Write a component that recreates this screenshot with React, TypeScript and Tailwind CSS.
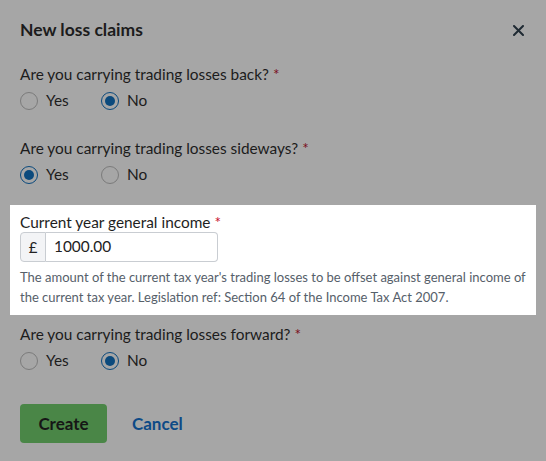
import { useState } from 'react';

type Choice = 'yes' | 'no';

export default function App() {
  const [back, setBack] = useState<Choice>('no');
  const [sideways, setSideways] = useState<Choice>('yes');
  const [forward, setForward] = useState<Choice>('no');
  const [income, setIncome] = useState('1000.00');

  return (
    <div
      className="min-h-[461px] w-[546px] bg-[#a6a6a6] px-[20px] pt-[18px] text-[#1c1c1c]"
      style={{ fontFamily: 'Lato, "Liberation Sans", sans-serif' }}
    >
      <div className="flex h-6 items-center justify-between">
        <h2 className="text-[17.5px] font-bold leading-6">New loss claims</h2>
        <button className="mr-[-4px] flex h-6 w-6 items-center justify-center text-[#1f2a33]">
          <svg width="11" height="11" viewBox="0 0 11 11" fill="none" stroke="currentColor" strokeWidth="2" strokeLinecap="round">
            <path d="M1 1l9 9M10 1l-9 9" />
          </svg>
        </button>
      </div>

      <div className="mt-[21px]">
        <Question label="Are you carrying trading losses back?" value={back} onChange={setBack} />
      </div>
      <div className="mt-[25px]">
        <Question label="Are you carrying trading losses sideways?" value={sideways} onChange={setSideways} />
      </div>

      <div className="-mx-[10px] mt-[19px] bg-white px-[10px] pb-[8px] pt-[7px]">
        <p className="text-[15.4px] leading-5 text-[#1e1e1e]">
          Current year general income <span className="text-[#c8102e]">*</span>
        </p>
        <div className="flex h-[30px] w-[198px]">
          <span className="flex w-[26px] items-center justify-center rounded-l-[4px] border border-[#c9cdd2] bg-[#f3f4f6] text-[15px] text-[#222]">
            £
          </span>
          <input
            value={income}
            onChange={(e) => setIncome(e.target.value)}
            className="min-w-0 flex-1 rounded-r-[4px] border border-l-0 border-[#c9cdd2] px-[8px] text-[15.4px] text-[#222] outline-none"
          />
        </div>
        <p className="mt-[5px] text-[13px] leading-5 text-[#56606a]">
          The amount of the current tax year's trading losses to be offset against general income of the current tax year. Legislation ref: Section 64 of the Income Tax Act 2007.
        </p>
      </div>

      <div className="mt-[8px]">
        <Question label="Are you carrying trading losses forward?" value={forward} onChange={setForward} />
      </div>

      <div className="mt-[32px] flex items-center gap-[25px]">
        <button className="h-[39px] w-[87px] rounded-[4px] bg-[#4a8647] text-[17px] font-bold text-[#161616]">
          Create
        </button>
        <button className="text-[17px] font-bold text-[#0d4a86]">Cancel</button>
      </div>
    </div>
  );
}

function Question({
  label,
  value,
  onChange,
}: {
  label: string;
  value: Choice;
  onChange: (v: Choice) => void;
}) {
  return (
    <div>
      <p className="text-[15.4px] leading-[22px]">
        {label} <span className="text-[#7a0e1c]">*</span>
      </p>
      <div className="mt-[5px] flex h-[22px] items-center">
        <Radio label="Yes" checked={value === 'yes'} onClick={() => onChange('yes')} className="w-[81px]" />
        <Radio label="No" checked={value === 'no'} onClick={() => onChange('no')} />
      </div>
    </div>
  );
}

function Radio({
  label,
  checked,
  onClick,
  className = '',
}: {
  label: string;
  checked: boolean;
  onClick: () => void;
  className?: string;
}) {
  return (
    <button onClick={onClick} className={`flex items-center gap-[8px] text-[15.4px] ${className}`}>
      <span
        className={`flex h-[18px] w-[18px] items-center justify-center rounded-full border bg-[#a6a6a6] ${
          checked ? 'border-[#0b4a7d]' : 'border-[#7b7b7b]'
        }`}
      >
        {checked && <span className="h-[10px] w-[10px] rounded-full bg-[#0b4a7d]" />}
      </span>
      {label}
    </button>
  );
}
